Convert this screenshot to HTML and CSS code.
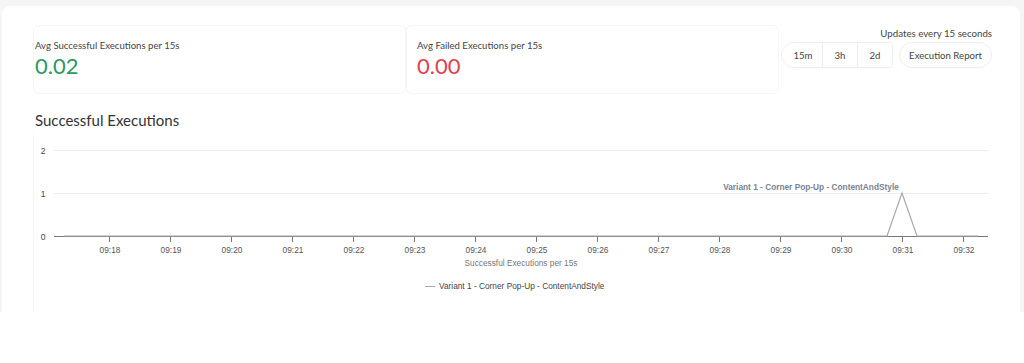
FILE: index.html
```html
<!DOCTYPE html>
<html>
<head>
<meta charset="utf-8">
<link rel="stylesheet" href="styles.css">
</head>
<body>
<div class="page">
  <div class="panel">
    <div class="top-row">
      <div class="stat stat-first">
        <div class="stat-label">Avg Successful Executions per 15s</div>
        <div class="stat-value ok">0.02</div>
      </div>
      <div class="stat stat-second">
        <div class="stat-label">Avg Failed Executions per 15s</div>
        <div class="stat-value bad">0.00</div>
      </div>
      <div class="controls">
        <div class="updates">Updates every 15 seconds</div>
        <div class="btn-row">
          <div class="seg">
            <button class="seg-btn seg-first">15m</button>
            <button class="seg-btn">3h</button>
            <button class="seg-btn seg-last">2d</button>
          </div>
          <button class="pill">Execution Report</button>
        </div>
      </div>
    </div>
    <h2 class="chart-title">Successful Executions</h2>
    <div class="chart-card">
      <svg class="chart" width="974" height="177" viewBox="0 0 974 177">
        <g class="grid">
          <line x1="20" y1="15.5" x2="954" y2="15.5"/>
          <line x1="20" y1="58.5" x2="954" y2="58.5"/>
        </g>
        <g class="ylab">
          <text x="9" y="18.5">2</text>
          <text x="9" y="61.5">1</text>
          <text x="9" y="104.5">0</text>
        </g>
        <line class="axis" x1="20" y1="101.5" x2="954" y2="101.5"/>
        <g class="ticks">
          <line x1="75.5" y1="101" x2="75.5" y2="107"/>
          <line x1="136.5" y1="101" x2="136.5" y2="107"/>
          <line x1="197.5" y1="101" x2="197.5" y2="107"/>
          <line x1="258.5" y1="101" x2="258.5" y2="107"/>
          <line x1="319.5" y1="101" x2="319.5" y2="107"/>
          <line x1="380.5" y1="101" x2="380.5" y2="107"/>
          <line x1="441.5" y1="101" x2="441.5" y2="107"/>
          <line x1="502.5" y1="101" x2="502.5" y2="107"/>
          <line x1="563.5" y1="101" x2="563.5" y2="107"/>
          <line x1="624.5" y1="101" x2="624.5" y2="107"/>
          <line x1="685.5" y1="101" x2="685.5" y2="107"/>
          <line x1="746.5" y1="101" x2="746.5" y2="107"/>
          <line x1="807.5" y1="101" x2="807.5" y2="107"/>
          <line x1="868.5" y1="101" x2="868.5" y2="107"/>
          <line x1="929.5" y1="101" x2="929.5" y2="107"/>
        </g>
        <g class="xlab">
          <text x="76" y="118">09:18</text>
          <text x="137" y="118">09:19</text>
          <text x="198" y="118">09:20</text>
          <text x="259" y="118">09:21</text>
          <text x="320" y="118">09:22</text>
          <text x="381" y="118">09:23</text>
          <text x="442" y="118">09:24</text>
          <text x="503" y="118">09:25</text>
          <text x="564" y="118">09:26</text>
          <text x="625" y="118">09:27</text>
          <text x="686" y="118">09:28</text>
          <text x="747" y="118">09:29</text>
          <text x="808" y="118">09:30</text>
          <text x="869" y="118">09:31</text>
          <text x="930" y="118">09:32</text>
        </g>
        <polyline class="series" points="30,101 853,101 868,58 883,101 944,101"/>
        <text class="peak" x="777" y="55">Variant 1 - Corner Pop-Up - ContentAndStyle</text>
        <text class="axis-title" x="487" y="131">Successful Executions per 15s</text>
        <line class="legend-line" x1="391" y1="151.5" x2="401" y2="151.5"/>
        <text class="legend" x="405" y="154">Variant 1 - Corner Pop-Up - ContentAndStyle</text>
      </svg>
    </div>
  </div>
</div>
</body>
</html>
```
FILE: styles.css
```css
* { box-sizing: border-box; }
html, body { margin: 0; padding: 0; background: #ffffff; }
body { font-family: Lato, "Open Sans", sans-serif; color: #333; }

.page {
  background: #f5f5f5;
  padding: 6px 4px 0 2px;
  height: 312px;
}
.panel {
  background: #ffffff;
  border-radius: 8px 8px 0 0;
  height: 306px;
  padding: 19px 0 0 31px;
}
.top-row {
  display: flex;
  align-items: flex-start;
}
.stat {
  width: 373px;
  height: 69px;
  border: 1px solid #f6f6f6;
  border-radius: 6px;
  padding-top: 13px;
}
.stat-first { padding-left: 1px; }
.stat-second { padding-left: 10px; }
.stat-label {
  font-size: 9.6px;
  color: #444;
  line-height: 13px;
}
.stat-value {
  font-size: 22px;
  line-height: 28px;
  margin-top: 0px;
}
.ok { color: #2a9a60; }
.bad { color: #e2404f; }

.controls {
  width: 213px;
  display: flex;
  flex-direction: column;
  align-items: flex-end;
}
.updates {
  font-size: 9.7px;
  color: #444;
  line-height: 14px;
  margin-top: 1px;
}
.btn-row {
  display: flex;
  gap: 6px;
  margin-top: 2px;
}
.seg {
  display: flex;
  border: 1px solid #eeeeee;
  border-radius: 13px 4px 4px 13px;
  height: 26px;
  overflow: hidden;
}
.seg-btn, .pill {
  font-family: Lato, "Open Sans", sans-serif;
  font-size: 9.6px;
  color: #444;
  background: #fff;
  border: none;
  padding: 0;
  margin: 0;
  cursor: pointer;
}
.seg-btn {
  width: 35px;
  border-left: 1px solid #eeeeee;
}
.seg-first { width: 40px; border-left: none; padding-left: 2px; }
.pill {
  width: 93px;
  height: 26px;
  border: 1px solid #eeeeee;
  border-radius: 13px;
}

.chart-title {
  font-size: 15px;
  font-weight: 400;
  color: #333;
  margin: 15px 0 0 2px;
  line-height: 22px;
}
.chart-card {
  width: 974px;
  height: 177px;
  margin-top: 4px;
  border-left: 1px solid #f5f5f5;
}
.chart { display: block; }
.chart text { font-family: "Liberation Sans", Arial, sans-serif; }
.grid line { stroke: #ececec; stroke-width: 1; }
.axis { stroke: #777; stroke-width: 1; }
.ticks line { stroke: #777; stroke-width: 1; }
.ylab text { font-size: 8.5px; fill: #444; text-anchor: middle; }
.xlab text { font-size: 8.3px; fill: #555; text-anchor: middle; }
.series { fill: none; stroke: #a8a8a8; stroke-width: 1.2; }
.peak { font-size: 8.3px; font-weight: bold; fill: #7a8294; text-anchor: middle; }
.axis-title { font-size: 8.3px; fill: #777; text-anchor: middle; }
.legend-line { stroke: #a8a8a8; stroke-width: 1; }
.legend { font-size: 8.3px; fill: #444; }
```
